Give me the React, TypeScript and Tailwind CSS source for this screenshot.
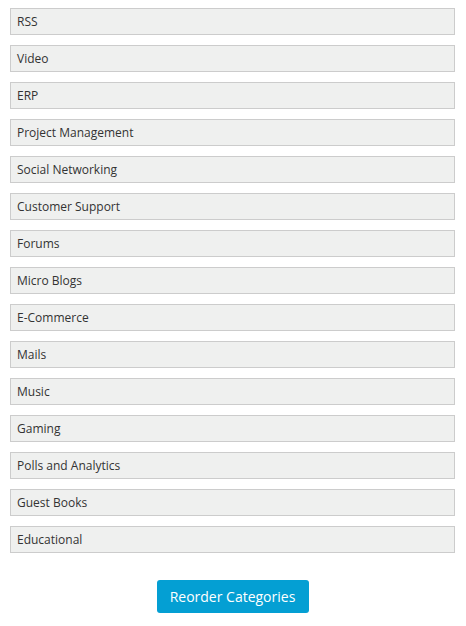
const categories = [
  "RSS",
  "Video",
  "ERP",
  "Project Management",
  "Social Networking",
  "Customer Support",
  "Forums",
  "Micro Blogs",
  "E-Commerce",
  "Mails",
  "Music",
  "Gaming",
  "Polls and Analytics",
  "Guest Books",
  "Educational",
];

export default function App() {
  return (
    <div className="min-h-screen bg-white pl-[10px] pr-[11px] pt-[8px] font-['Open_Sans',sans-serif]">
      <ul className="flex flex-col gap-[10px]">
        {categories.map((name) => (
          <li
            key={name}
            className="flex h-[27px] items-center border border-[#cccccc] bg-[#eff0ef] pl-[6px] text-[12px] text-[#333333]"
          >
            {name}
          </li>
        ))}
      </ul>
      <div className="mt-[27px] flex justify-center">
        <button className="h-[33px] w-[152px] rounded-[3px] bg-[#049fd3] text-[14px] text-white">
          Reorder Categories
        </button>
      </div>
    </div>
  );
}
